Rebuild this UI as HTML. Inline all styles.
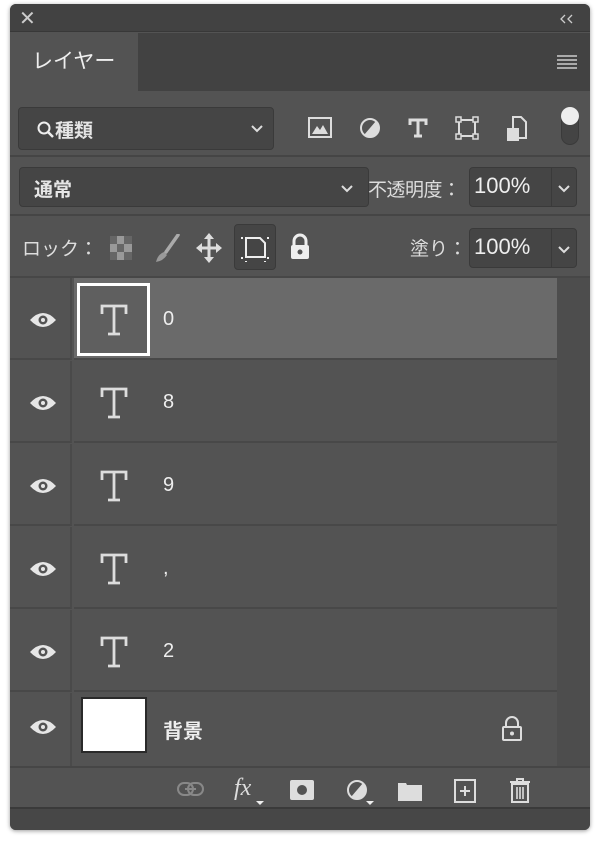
<!DOCTYPE html>
<html><head><meta charset="utf-8"><style>
*{margin:0;padding:0;box-sizing:border-box}
body{width:600px;height:845px;background:#fff;position:relative;overflow:hidden;font-family:"Liberation Sans","Noto Sans CJK JP",sans-serif;color:#e6e6e6}
.a{position:absolute}
.panel{left:10px;top:4px;width:580px;height:826px;background:#535353;border-radius:6px;overflow:hidden;box-shadow:0 1px 4px rgba(0,0,0,.4)}
.inp{background:#454545;border:1px solid #3a3a3a;border-radius:4px}
.row{left:64px;width:483px;height:82px;border-bottom:2px solid #484848;background:#535353}
.eyecol{left:0;width:62px;height:82px;border-bottom:2px solid #484848;border-right:2px solid #4a4a4a}
.name{font-size:20px;color:#eee}
</style></head><body>
<svg width="0" height="0" style="position:absolute"><defs><g id="T"><path d="M2 10 V2 H26 V10 M14 2 V30 M8 30 H20" fill="none" stroke="#ddd" stroke-width="2.8" stroke-linejoin="miter"/></g></defs></svg>
<div class="a panel">
 <div class="a" style="left:0;top:0;width:580px;height:28px;background:#424242;border-bottom:1px solid #383838"></div>
 <div class="a" style="left:9px;top:2px;font-size:20px;color:#ccc">✕</div>
 <svg class="a" style="left:550px;top:10px" width="14" height="10"><path d="M5 1 L1 5 L5 9 M12 1 L8 5 L12 9" fill="none" stroke="#ccc" stroke-width="1.3"/></svg>
 <div class="a" style="left:0;top:29px;width:580px;height:58px;background:#424242"></div>
 <div class="a" style="left:0;top:29px;width:128px;height:59px;background:#535353"></div>
 <div class="a" style="left:22px;top:41px;font-size:21px;color:#eee">レイヤー</div>
 <svg class="a" style="left:546px;top:50px" width="22" height="16"><g stroke="#ccc" stroke-width="1.5"><line x1="1" y1="2" x2="21" y2="2"/><line x1="1" y1="6" x2="21" y2="6"/><line x1="1" y1="10" x2="21" y2="10"/><line x1="1" y1="14" x2="21" y2="14"/></g></svg>
 <div class="a inp" style="left:8px;top:103px;width:256px;height:43px"></div>
 <svg class="a" style="left:26px;top:116px" width="20" height="20"><circle cx="8" cy="8" r="5.5" stroke="#eee" stroke-width="2" fill="none"/><line x1="12" y1="12" x2="17" y2="17" stroke="#eee" stroke-width="2.5"/></svg>
 <div class="a" style="left:45px;top:112px;font-size:19px;font-weight:bold">種類</div>
 <svg class="a" style="left:240px;top:120px" width="14" height="9"><path d="M2 2 L7 7 L12 2" fill="none" stroke="#ddd" stroke-width="2"/></svg>
 <svg class="a" style="left:298px;top:113px" width="24" height="22"><rect x="1" y="1" width="22" height="19" fill="none" stroke="#ddd" stroke-width="2"/><path d="M4 17 L9 9 L12 13 L15 8 L20 17Z" fill="#ddd"/></svg>
 <svg class="a" style="left:349px;top:113px" width="22" height="22"><circle cx="11" cy="11" r="9" fill="none" stroke="#ddd" stroke-width="2"/><path d="M17 4 A9 9 0 0 1 5 18Z" fill="#ddd"/></svg>
 <svg class="a" style="left:398px;top:114px" width="20" height="20"><path d="M2 7 V2 H18 V7 M10 2 V18 M6 18 H14" fill="none" stroke="#ddd" stroke-width="3"/></svg>
 <svg class="a" style="left:445px;top:112px" width="24" height="24"><rect x="4" y="4" width="16" height="16" fill="none" stroke="#ddd" stroke-width="2"/><g fill="#535353" stroke="#ddd" stroke-width="1.5"><rect x="1" y="1" width="5" height="5"/><rect x="18" y="1" width="5" height="5"/><rect x="1" y="18" width="5" height="5"/><rect x="18" y="18" width="5" height="5"/></g></svg>
 <svg class="a" style="left:496px;top:112px" width="22" height="26"><path d="M7 1 H15 L20 6 V22 H7Z" fill="none" stroke="#ddd" stroke-width="2"/><rect x="1" y="12" width="12" height="13" fill="#ddd"/></svg>
 <div class="a" style="left:551px;top:103px;width:18px;height:38px;border-radius:9px;background:#444;border:1px solid #3a3a3a"></div>
 <div class="a" style="left:551px;top:103px;width:18px;height:18px;border-radius:9px;background:#eee"></div>
 <div class="a" style="left:0;top:151px;width:580px;height:2px;background:#454545"></div>
 <div class="a inp" style="left:9px;top:163px;width:350px;height:40px"></div>
 <div class="a" style="left:24px;top:171px;font-size:19px;font-weight:bold">通常</div>
 <svg class="a" style="left:330px;top:180px" width="14" height="9"><path d="M2 2 L7 7 L12 2" fill="none" stroke="#ddd" stroke-width="2"/></svg>
 <div class="a" style="left:358px;top:171px;font-size:19px;color:#ddd;letter-spacing:-0.5px">不透明度：</div>
 <div class="a inp" style="left:459px;top:163px;width:108px;height:40px;border-radius:4px"></div>
 <div class="a" style="left:541px;top:163px;width:1px;height:40px;background:#3a3a3a"></div>
 <div class="a" style="left:464px;top:169px;font-size:22px;color:#eee">100%</div>
 <svg class="a" style="left:547px;top:180px" width="14" height="9"><path d="M2 2 L7 7 L12 2" fill="none" stroke="#ddd" stroke-width="2"/></svg>
 <div class="a" style="left:0;top:210px;width:580px;height:2px;background:#454545"></div>
 <div class="a" style="left:12px;top:230px;font-size:19px;color:#ddd">ロック：</div>
 <svg class="a" style="left:100px;top:232px" width="22" height="24"><rect x="0" y="0" width="22" height="24" fill="#999"/><g fill="#666"><rect x="0" y="0" width="7" height="8"/><rect x="14" y="0" width="8" height="8"/><rect x="7" y="8" width="7" height="8"/><rect x="0" y="16" width="7" height="8"/><rect x="14" y="16" width="8" height="8"/></g></svg>
 <svg class="a" style="left:144px;top:230px" width="26" height="30"><path d="M24 1 L12 18" stroke="#aaa" stroke-width="3.5" stroke-linecap="round"/><path d="M10 18 Q4 20 2 28 Q9 27 13 21Z" fill="#999"/></svg>
 <svg class="a" style="left:186px;top:229px" width="26" height="30"><g stroke="#ddd" stroke-width="3" fill="#ddd"><line x1="13" y1="3" x2="13" y2="27"/><line x1="2" y1="15" x2="24" y2="15"/></g><g fill="#ddd"><path d="M13 0 L8 6 H18Z"/><path d="M13 30 L8 24 H18Z"/><path d="M0 15 L6 10 V20Z"/><path d="M26 15 L20 10 V20Z"/></g></svg>
 <div class="a" style="left:224px;top:220px;width:42px;height:46px;background:#454545;border:1px solid #3a3a3a;border-radius:4px"></div>
 <svg class="a" style="left:231px;top:230px" width="28" height="28"><path d="M5 4 H19 L24 9 V23 H5Z" fill="none" stroke="#eee" stroke-width="2"/><g fill="#eee"><rect x="0" y="3" width="2" height="2"/><rect x="26" y="3" width="2" height="2"/><rect x="0" y="23" width="2" height="2"/><rect x="26" y="23" width="2" height="2"/><rect x="4" y="27" width="2" height="1"/><rect x="23" y="27" width="2" height="1"/></g></svg>
 <svg class="a" style="left:279px;top:229px" width="22" height="28"><path d="M5 12 V8 A6 6 0 0 1 17 8 V12" fill="none" stroke="#eee" stroke-width="3"/><rect x="2" y="12" width="18" height="14" rx="2" fill="#eee"/><circle cx="11" cy="19" r="2.5" fill="#535353"/></svg>
 <div class="a" style="left:400px;top:230px;font-size:19px;color:#ddd">塗り：</div>
 <div class="a inp" style="left:459px;top:224px;width:108px;height:40px"></div>
 <div class="a" style="left:541px;top:224px;width:1px;height:40px;background:#3a3a3a"></div>
 <div class="a" style="left:464px;top:230px;font-size:22px;color:#eee">100%</div>
 <svg class="a" style="left:547px;top:241px" width="14" height="9"><path d="M2 2 L7 7 L12 2" fill="none" stroke="#ddd" stroke-width="2"/></svg>
 <div class="a" style="left:0;top:272px;width:580px;height:2px;background:#474747"></div>
 <div class="a" style="left:547px;top:274px;width:33px;height:488px;background:#4d4d4d"></div>
 <div class="a eyecol" style="top:274px"></div><div class="a row" style="top:274px;background:#6a6a6a"></div>
 <div class="a eyecol" style="top:357px"></div><div class="a row" style="top:357px"></div>
 <div class="a eyecol" style="top:440px"></div><div class="a row" style="top:440px"></div>
 <div class="a eyecol" style="top:523px"></div><div class="a row" style="top:523px"></div>
 <div class="a eyecol" style="top:606px"></div><div class="a row" style="top:606px"></div>
 <div class="a eyecol" style="top:689px;height:73px;border-bottom:none"></div><div class="a row" style="top:689px;height:73px;border-bottom:none"></div>
 <div class="a" style="left:67px;top:279px;width:73px;height:73px;border:3px solid #fff;background:#5f5f5f"></div>
 <div class="a" style="left:71px;top:693px;width:66px;height:56px;border:2px solid #2a2a2a;background:#fff"></div>
 <svg class="a" style="left:19px;top:306px" width="28" height="20"><path d="M1 10 Q14 -4 27 10 Q14 24 1 10Z" fill="#e6e6e6"/><circle cx="14" cy="10" r="4.5" fill="#535353"/><circle cx="14" cy="10" r="2" fill="#e6e6e6"/></svg>
 <svg class="a" style="left:19px;top:389px" width="28" height="20"><path d="M1 10 Q14 -4 27 10 Q14 24 1 10Z" fill="#e6e6e6"/><circle cx="14" cy="10" r="4.5" fill="#535353"/><circle cx="14" cy="10" r="2" fill="#e6e6e6"/></svg>
 <svg class="a" style="left:19px;top:472px" width="28" height="20"><path d="M1 10 Q14 -4 27 10 Q14 24 1 10Z" fill="#e6e6e6"/><circle cx="14" cy="10" r="4.5" fill="#535353"/><circle cx="14" cy="10" r="2" fill="#e6e6e6"/></svg>
 <svg class="a" style="left:19px;top:555px" width="28" height="20"><path d="M1 10 Q14 -4 27 10 Q14 24 1 10Z" fill="#e6e6e6"/><circle cx="14" cy="10" r="4.5" fill="#535353"/><circle cx="14" cy="10" r="2" fill="#e6e6e6"/></svg>
 <svg class="a" style="left:19px;top:638px" width="28" height="20"><path d="M1 10 Q14 -4 27 10 Q14 24 1 10Z" fill="#e6e6e6"/><circle cx="14" cy="10" r="4.5" fill="#535353"/><circle cx="14" cy="10" r="2" fill="#e6e6e6"/></svg>
 <svg class="a" style="left:19px;top:713px" width="28" height="20"><path d="M1 10 Q14 -4 27 10 Q14 24 1 10Z" fill="#e6e6e6"/><circle cx="14" cy="10" r="4.5" fill="#535353"/><circle cx="14" cy="10" r="2" fill="#e6e6e6"/></svg>
 <svg class="a" style="left:90px;top:300px" width="28" height="32"><use href="#T"/></svg>
 <svg class="a" style="left:90px;top:383px" width="28" height="32"><use href="#T"/></svg>
 <svg class="a" style="left:90px;top:466px" width="28" height="32"><use href="#T"/></svg>
 <svg class="a" style="left:90px;top:549px" width="28" height="32"><use href="#T"/></svg>
 <svg class="a" style="left:90px;top:632px" width="28" height="32"><use href="#T"/></svg>
 <div class="a name" style="left:153px;top:304px">0</div>
 <div class="a name" style="left:153px;top:387px">8</div>
 <div class="a name" style="left:153px;top:470px">9</div>
 <div class="a name" style="left:153px;top:553px">,</div>
 <div class="a name" style="left:153px;top:636px">2</div>
 <div class="a name" style="left:153px;top:711px;font-weight:bold">背景</div>
 <svg class="a" style="left:491px;top:712px" width="22" height="26"><path d="M5 11 V7 A6 6 0 0 1 17 7 V11" fill="none" stroke="#ddd" stroke-width="2"/><rect x="2" y="11" width="18" height="13" rx="1" fill="none" stroke="#ddd" stroke-width="2"/><circle cx="11" cy="17.5" r="2" fill="#ddd"/></svg>
 <div class="a" style="left:0;top:762px;width:580px;height:2px;background:#464646"></div>
 <div class="a" style="left:0;top:803px;width:580px;height:23px;background:#474747;border-top:2px solid #3a3a3a"></div>
 <svg class="a" style="left:166px;top:776px" width="30" height="18"><rect x="2" y="3" width="15" height="12" rx="6" fill="none" stroke="#888" stroke-width="2"/><rect x="12" y="3" width="15" height="12" rx="6" fill="none" stroke="#888" stroke-width="2"/><line x1="9" y1="9" x2="20" y2="9" stroke="#888" stroke-width="2"/></svg>
 <div class="a" style="left:224px;top:771px;font-size:24px;font-style:italic;color:#ddd;font-family:'Liberation Serif',serif">fx</div>
 <div class="a" style="left:246px;top:797px;width:0;height:0;border-left:4px solid transparent;border-right:4px solid transparent;border-top:4px solid #eee"></div>
 <svg class="a" style="left:280px;top:776px" width="24" height="20"><rect x="0" y="0" width="24" height="20" rx="2" fill="#ddd"/><circle cx="12" cy="10" r="5" fill="#535353"/></svg>
 <svg class="a" style="left:336px;top:775px" width="22" height="22"><circle cx="11" cy="11" r="9" fill="none" stroke="#ddd" stroke-width="2"/><path d="M17 4 A9 9 0 0 1 5 18Z" fill="#ddd"/></svg>
 <div class="a" style="left:356px;top:797px;width:0;height:0;border-left:4px solid transparent;border-right:4px solid transparent;border-top:4px solid #eee"></div>
 <svg class="a" style="left:387px;top:776px" width="26" height="22"><path d="M1 3 H9 L10 5 H25 V21 H1Z" fill="#ddd"/></svg>
 <svg class="a" style="left:444px;top:775px" width="22" height="24"><rect x="1" y="1" width="20" height="22" fill="none" stroke="#ddd" stroke-width="2"/><line x1="11" y1="7" x2="11" y2="17" stroke="#ddd" stroke-width="2"/><line x1="6" y1="12" x2="16" y2="12" stroke="#ddd" stroke-width="2"/></svg>
 <svg class="a" style="left:499px;top:773px" width="22" height="26"><path d="M1 5 H21 M8 5 V2 H14 V5" fill="none" stroke="#ddd" stroke-width="2"/><path d="M3 7 H19 V25 H3Z" fill="none" stroke="#ddd" stroke-width="2"/><g stroke="#ddd" stroke-width="1.6"><line x1="8" y1="10" x2="8" y2="22"/><line x1="11" y1="10" x2="11" y2="22"/><line x1="14" y1="10" x2="14" y2="22"/></g></svg>
</div>
</body></html>
